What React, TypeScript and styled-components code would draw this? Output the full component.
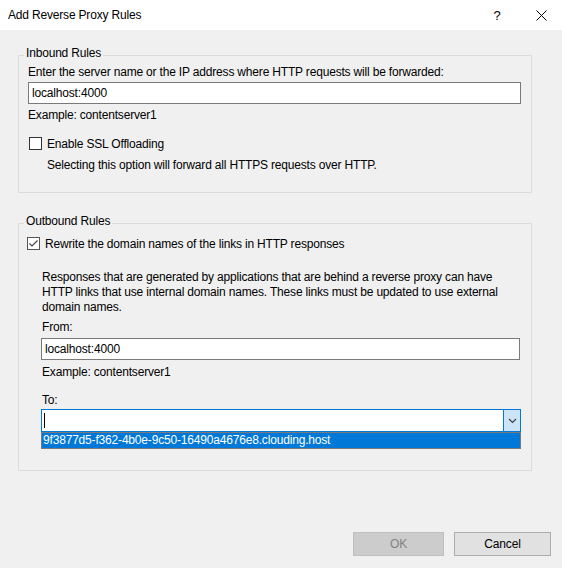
import { FC } from "react";
import styled, { createGlobalStyle } from "styled-components";

const GlobalStyle = createGlobalStyle`
  html, body {
    margin: 0;
    padding: 0;
    background: #f0f0f0;
  }

  body {
    font-family: "Liberation Sans", Arial, sans-serif;
    font-size: 12px;
    letter-spacing: -0.18px;
    color: #000000;
  }
`;

const Window = styled.div`
  width: 562px;
  height: 568px;
  display: flex;
  flex-direction: column;
  background-color: #f0f0f0;
  overflow: hidden;
`;

const TitleBar = styled.div`
  height: 30px;
  display: flex;
  flex-direction: row;
  align-items: center;

  background-color: #ffffff;
  padding-left: 8px;
`;

const Title = styled.span`
  flex: 1;
  line-height: 15px;
`;

const CaptionButton = styled.div<{ $width: number }>`
  width: ${(props) => props.$width + "px"};
  height: 30px;
  display: flex;
  align-items: center;
  justify-content: center;
  font-size: 13px;
`;

const Content = styled.div`
  display: flex;
  flex-direction: column;
  padding: 25px 30px 0 18px;
  gap: 30px;
`;

const GroupBox = styled.div<{ $padding: string }>`
  position: relative;
  display: flex;
  flex-direction: column;

  border: 1px solid #dcdcdc;
  padding: ${(props) => props.$padding};
`;

const GroupTitle = styled.span`
  position: absolute;
  top: -10px;
  left: 5px;

  padding: 0 2px;
  line-height: 15px;
  background-color: #f0f0f0;
`;

const Label = styled.span<{ $top?: number; $indent?: number }>`
  display: block;
  line-height: 15px;
  margin-top: ${(props) => (props.$top ?? 0) + "px"};
  padding-left: ${(props) => (props.$indent ?? 0) + "px"};
  white-space: nowrap;
`;

const TextInput = styled.div<{ $top: number }>`
  height: 22px;
  box-sizing: border-box;
  display: flex;
  align-items: center;

  margin-top: ${(props) => props.$top + "px"};
  padding-left: 3px;
  border: 1px solid #7a7a7a;
  background-color: #ffffff;
`;

const CheckRow = styled.label<{ $top: number; $indent?: number }>`
  display: flex;
  flex-direction: row;
  align-items: center;
  gap: 5px;

  height: 15px;
  margin-top: ${(props) => props.$top + "px"};
  padding-left: ${(props) => (props.$indent ?? 0) + "px"};
`;

const CheckBox = styled.span<{ $checked?: boolean }>`
  width: 13px;
  height: 13px;
  box-sizing: border-box;
  display: flex;
  align-items: center;
  justify-content: center;

  border: 1px solid ${(props) => (props.$checked ? "#555555" : "#333333")};
  background-color: #ffffff;
`;

const Indented = styled.div`
  display: flex;
  flex-direction: column;
  padding-left: 14px;
`;

const ComboWrap = styled.div`
  position: relative;
  margin-top: 1px;
  margin-right: -1px;
`;

const Combo = styled.div`
  height: 23px;
  box-sizing: border-box;
  display: flex;
  flex-direction: row;

  border: 1px solid #0078d7;
  background-color: #ffffff;
`;

const ComboField = styled.div`
  flex: 1;
  display: flex;
  align-items: center;
  padding-left: 2px;
`;

const Caret = styled.span`
  width: 1px;
  height: 15px;
  background-color: #000000;
`;

const DropButton = styled.div`
  width: 16px;
  display: flex;
  align-items: center;
  justify-content: center;

  border-left: 1px solid #0078d7;
  background-color: #cce4f7;
`;

const DropList = styled.ul`
  position: absolute;
  top: 100%;
  left: 0;
  right: 0;
  z-index: 2;

  margin: 0;
  padding: 0;
  list-style: none;

  border: 1px solid #7a7a7a;
  background-color: #ffffff;
`;

const DropItem = styled.li<{ $selected?: boolean }>`
  height: 15px;
  line-height: 15px;
  padding-left: 1px;
  white-space: nowrap;

  color: ${(props) => (props.$selected ? "#ffffff" : "#000000")};
  background-color: ${(props) => (props.$selected ? "#0078d7" : "#ffffff")};
`;

const Footer = styled.div`
  margin-top: auto;
  display: flex;
  flex-direction: row;
  justify-content: flex-end;
  gap: 10px;
  padding: 0 11px 12px 0;
`;

const DialogButton = styled.button<{ $width: number }>`
  width: ${(props) => props.$width + "px"};
  height: 24px;
  box-sizing: border-box;
  padding: 0;

  font-family: inherit;
  font-size: 12px;
  letter-spacing: inherit;
  border: 1px solid #adadad;
  background-color: #e1e1e1;
  color: #000000;

  &:disabled {
    border-color: #bfbfbf;
    background-color: #cccccc;
    color: #838383;
  }
`;

const CheckMark = () => (
  <svg width="11" height="11" viewBox="0 0 11 11">
    <path d="M1.5 5.5 L4 8 L9.5 2.5" fill="none" stroke="#444" strokeWidth="1.2" />
  </svg>
);

const Chevron = () => (
  <svg width="9" height="6" viewBox="0 0 9 6">
    <path d="M1 1 L4.5 4.5 L8 1" fill="none" stroke="#404040" strokeWidth="1.2" />
  </svg>
);

const CloseGlyph = () => (
  <svg width="11" height="11" viewBox="0 0 11 11">
    <path d="M0.5 0.5 L10.5 10.5 M10.5 0.5 L0.5 10.5" stroke="#000" strokeWidth="1" />
  </svg>
);

const App: FC = () => {
  return (
    <Window>
      <GlobalStyle />
      <TitleBar>
        <Title>Add Reverse Proxy Rules</Title>
        <CaptionButton $width={46}>?</CaptionButton>
        <CaptionButton $width={42}>
          <CloseGlyph />
        </CaptionButton>
      </TitleBar>

      <Content>
        <GroupBox $padding="9px 10px 19px 9px">
          <GroupTitle>Inbound Rules</GroupTitle>
          <Label>
            Enter the server name or the IP address where HTTP requests will be
            forwarded:
          </Label>
          <TextInput $top={2}>localhost:4000</TextInput>
          <Label $top={4}>Example: contentserver1</Label>
          <CheckRow $top={13} $indent={1}>
            <CheckBox />
            Enable SSL Offloading
          </CheckRow>
          <Label $top={7} $indent={19}>
            Selecting this option will forward all HTTPS requests over HTTP.
          </Label>
        </GroupBox>

        <GroupBox $padding="12px 11px 20px 8px">
          <GroupTitle>Outbound Rules</GroupTitle>
          <CheckRow $top={0}>
            <CheckBox $checked>
              <CheckMark />
            </CheckBox>
            Rewrite the domain names of the links in HTTP responses
          </CheckRow>
          <Indented>
            <Label $top={19} $indent={1}>
              Responses that are generated by applications that are behind a
              reverse proxy can have
              <br />
              HTTP links that use internal domain names. These links must be
              updated to use external
              <br />
              domain names.
            </Label>
            <Label $top={5} $indent={1}>
              From:
            </Label>
            <TextInput $top={3}>localhost:4000</TextInput>
            <Label $top={5} $indent={1}>
              Example: contentserver1
            </Label>
            <Label $top={13} $indent={1}>
              To:
            </Label>
            <ComboWrap>
              <Combo>
                <ComboField>
                  <Caret />
                </ComboField>
                <DropButton>
                  <Chevron />
                </DropButton>
              </Combo>
              <DropList>
                <DropItem $selected>
                  9f3877d5-f362-4b0e-9c50-16490a4676e8.clouding.host
                </DropItem>
              </DropList>
            </ComboWrap>
            <Label $top={3} $indent={1}>
              Example: contentserver1
            </Label>
          </Indented>
        </GroupBox>
      </Content>

      <Footer>
        <DialogButton $width={91} disabled>
          OK
        </DialogButton>
        <DialogButton $width={97}>Cancel</DialogButton>
      </Footer>
    </Window>
  );
};

export default App;
